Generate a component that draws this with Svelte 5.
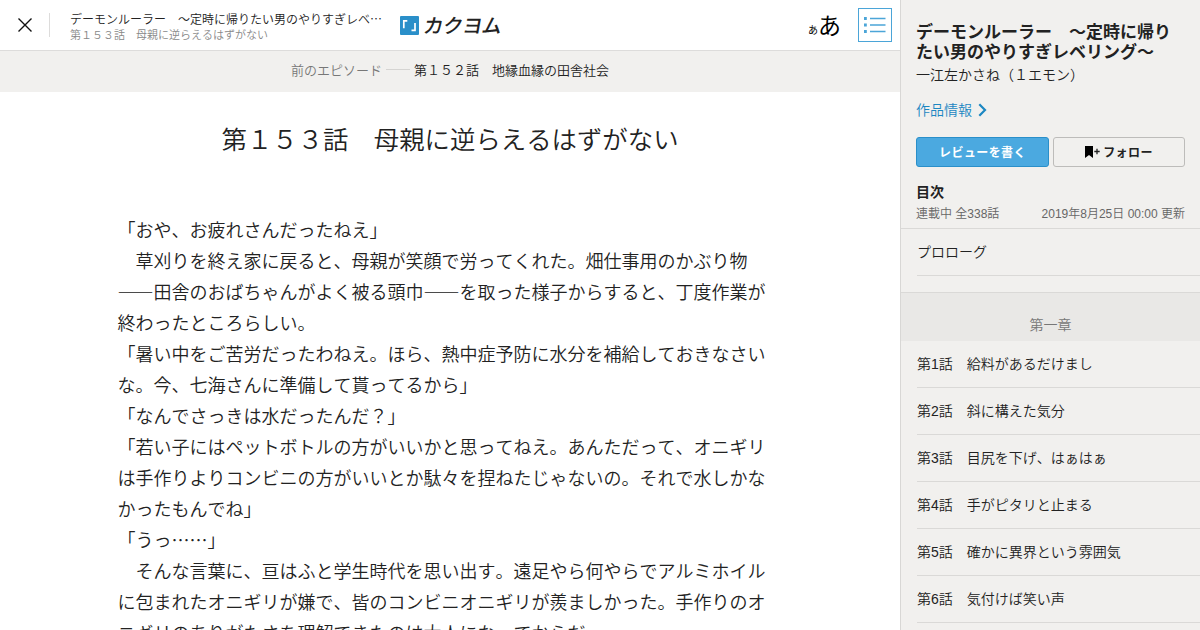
<script lang="ts">
  const workTitle = 'デーモンルーラー　～定時に帰りたい男のやりすぎレベリング～';
  const episodeTitle = '第１５３話　母親に逆らえるはずがない';

  // One entry per printed line
  const lines: string[] = [
    '「おや、お疲れさんだったねえ」',
    '　草刈りを終え家に戻ると、母親が笑顔で労ってくれた。畑仕事用のかぶり物',
    '――田舎のおばちゃんがよく被る頭巾――を取った様子からすると、丁度作業が',
    '終わったところらしい。',
    '「暑い中をご苦労だったわねえ。ほら、熱中症予防に水分を補給しておきなさい',
    'な。今、七海さんに準備して貰ってるから」',
    '「なんでさっきは水だったんだ？」',
    '「若い子にはペットボトルの方がいいかと思ってねえ。あんただって、オニギリ',
    'は手作りよりコンビニの方がいいとか駄々を捏ねたじゃないの。それで水しかな',
    'かったもんでね」',
    '「うっ……」',
    '　そんな言葉に、亘はふと学生時代を思い出す。遠足やら何やらでアルミホイル',
    'に包まれたオニギリが嫌で、皆のコンビニオニギリが羨ましかった。手作りのオ',
    'ニギリのありがたさを理解できたのは大人になってからだ。',
  ];

  const episodes: string[] = [
    '第1話　給料があるだけまし',
    '第2話　斜に構えた気分',
    '第3話　目尻を下げ、はぁはぁ',
    '第4話　手がピタリと止まる',
    '第5話　確かに異界という雰囲気',
    '第6話　気付けば笑い声',
  ];
</script>

<div class="page">
  <main class="viewer">
    <header class="header">
      <button class="close" aria-label="閉じる">
        <svg width="16" height="16" viewBox="0 0 16 16">
          <path d="M1.5 1.5 14.5 14.5M14.5 1.5 1.5 14.5" stroke="#111" stroke-width="1.4" fill="none" />
        </svg>
      </button>
      <div class="titles">
        <p class="work">{workTitle.slice(0, 25)}…</p>
        <p class="episode">{episodeTitle}</p>
      </div>
      <a class="logo" href="#top">
        <svg width="19" height="19" viewBox="0 0 19 19">
          <rect width="19" height="19" rx="1" fill="#2a8fc9" />
          <path d="M3.8 12.3V4.9H7.3M15 6.9V14.3H11.5" stroke="#fff" stroke-width="1.7" fill="none" />
        </svg>
        <span class="logo-text">カクヨム</span>
      </a>
      <button class="font-size" aria-label="文字サイズ">
        <span class="small">あ</span><span class="large">あ</span>
      </button>
      <button class="toc-button" aria-label="目次">
        <svg width="22" height="18" viewBox="0 0 22 18">
          <path d="M6 2.5H21.5M6 9H21.5M6 15.5H21.5" stroke="#4ba5d8" stroke-width="1.6" />
          <path d="M0 2.5H2.8M0 9H2.8M0 15.5H2.8" stroke="#4ba5d8" stroke-width="2.8" />
        </svg>
      </button>
    </header>

    <nav class="previous">
      <span class="label">前のエピソード</span>
      <span class="dash"></span>
      <span>第１５２話　地縁血縁の田舎社会</span>
    </nav>

    <article>
      <h1>{episodeTitle}</h1>
      <div class="body">
        {#each lines as line}
          <p>{line}</p>
        {/each}
      </div>
    </article>
  </main>

  <aside class="sidebar">
    <div class="info">
      <h2>{workTitle}</h2>
      <p class="author">一江左かさね（１エモン）</p>
      <a class="detail" href="#info">
        作品情報
        <svg width="9" height="14" viewBox="0 0 9 14">
          <path d="M1.3 1.3 7 7 1.3 12.7" stroke="#1c87c2" stroke-width="2.2" fill="none" />
        </svg>
      </a>
      <div class="actions">
        <button class="review">レビューを書く</button>
        <button class="follow">
          <svg width="15" height="12" viewBox="0 0 15 12">
            <path d="M0 0H8V12L4 9 0 12Z" fill="#000" />
            <path d="M9.3 5.5H14.7M12 2.8V8.2" stroke="#222" stroke-width="1.3" />
          </svg>
          <span>フォロー</span>
        </button>
      </div>
      <h3>目次</h3>
      <div class="status">
        <span>連載中 全338話</span>
        <span>2019年8月25日 00:00 更新</span>
      </div>
    </div>

    <ol class="list first">
      <li>プロローグ</li>
    </ol>
    <h4>第一章</h4>
    <ol class="list">
      {#each episodes as episode}
        <li>{episode}</li>
      {/each}
    </ol>
  </aside>
</div>

<style>
  :global(body) {
    margin: 0;
    overflow: hidden;
  }

  .page {
    display: flex;
    width: 1200px;
    height: 630px;
    overflow: hidden;
    background: #fff;
    color: #222;
    font-family: 'Noto Sans CJK JP', sans-serif;
    font-weight: 350;
    text-spacing-trim: space-all;
    font-kerning: none;
  }

  .page * {
    box-sizing: border-box;
  }

  p,
  h1,
  h2,
  h3,
  h4,
  ol {
    margin: 0;
    padding: 0;
  }

  a {
    text-decoration: none;
    color: inherit;
  }

  button {
    padding: 0;
    border: 0;
    background: none;
    font-family: inherit;
    color: inherit;
  }

  .viewer {
    width: 900px;
    flex: none;
  }

  /* header */
  .header {
    display: flex;
    align-items: center;
    height: 51px;
    padding-right: 8px;
    border-bottom: 1px solid #dddcdb;
    white-space: nowrap;
  }

  .close {
    display: flex;
    align-items: center;
    justify-content: center;
    width: 50px;
    height: 24px;
    border-right: 1px solid #dddcdb;
  }

  .titles {
    width: 330px;
    padding: 1px 0 0 20px;
  }

  .work {
    font-size: 12px;
    line-height: 16px;
  }

  .episode {
    font-size: 11px;
    line-height: 14px;
    color: #888;
  }

  .logo {
    display: flex;
    align-items: center;
    gap: 5px;
    margin-left: 20px;
  }

  .logo-text {
    font-size: 20px;
    line-height: 24px;
    font-weight: 500;
    letter-spacing: -0.6px;
    transform: skewX(-10deg);
  }

  .font-size {
    display: flex;
    align-items: baseline;
    margin-left: auto;
    margin-right: 17px;
    padding-bottom: 2px;
    color: #000;
    font-weight: 400;
  }

  .small {
    font-size: 10px;
  }

  .large {
    font-size: 23px;
    line-height: 30px;
  }

  .toc-button {
    display: flex;
    align-items: center;
    justify-content: center;
    width: 34px;
    height: 34px;
    border: 1px solid #4ba5d8;
  }

  .previous {
    display: flex;
    justify-content: center;
    gap: 4px;
    height: 41px;
    background: #f1f0ee;
    font-size: 13px;
    line-height: 37px;
  }

  .label {
    color: #777;
  }

  .dash {
    width: 24px;
    height: 1px;
    margin-top: 18px;
    background: #d5d4d2;
  }

  /* episode text */
  h1 {
    padding-top: 26px;
    font-size: 25.4px;
    line-height: 40px;
    font-weight: 350;
    text-align: center;
  }

  .body {
    padding: 56px 0 0 117.5px;
    font-size: 18px;
    line-height: 31px;
    white-space: nowrap;
  }

  /* sidebar */
  .sidebar {
    width: 300px;
    flex: none;
    border-left: 1px solid #d8d7d5;
    background: #f1f0ee;
    font-family: 'Liberation Sans', 'Noto Sans CJK JP', sans-serif;
  }

  .info {
    height: 229px;
    padding: 23px 15px 0;
    border-bottom: 1px solid #dad9d7;
  }

  h2 {
    font-size: 17px;
    line-height: 20px;
    font-weight: 700;
  }

  .author {
    font-size: 14px;
    line-height: 20px;
    margin-top: 2px;
  }

  .detail {
    display: flex;
    align-items: center;
    gap: 6px;
    margin-top: 15px;
    font-size: 14px;
    line-height: 20px;
    color: #1c87c2;
  }

  .actions {
    display: flex;
    gap: 4px;
    margin-top: 17px;
  }

  .actions button {
    display: flex;
    align-items: center;
    justify-content: center;
    height: 30px;
    padding-bottom: 1px;
    border: 1px solid #bdbcba;
    border-radius: 3px;
    font-size: 12px;
    font-weight: 700;
    letter-spacing: 0.4px;
  }

  .actions .review {
    width: 133px;
    border-color: #2a8fc9;
    background: #4ba9e0;
    color: #fff;
  }

  .actions .follow {
    width: 132px;
    gap: 3px;
  }

  h3 {
    margin-top: 15px;
    font-size: 14px;
    line-height: 20px;
  }

  .status {
    display: flex;
    justify-content: space-between;
    margin-top: 4px;
    font-size: 12px;
    line-height: 16px;
    color: #666;
  }

  .list {
    padding-left: 16px;
    list-style: none;
    font-size: 14px;
  }

  .list li {
    height: 47px;
    line-height: 46px;
    border-bottom: 1px solid #dad9d7;
  }

  .first {
    padding-bottom: 16px;
  }

  h4 {
    height: 49px;
    padding-top: 17px;
    border-top: 1px solid #dad9d7;
    background: #e9e8e6;
    font-size: 14px;
    line-height: 31px;
    font-weight: 350;
    text-align: center;
    color: #777;
  }
</style>
